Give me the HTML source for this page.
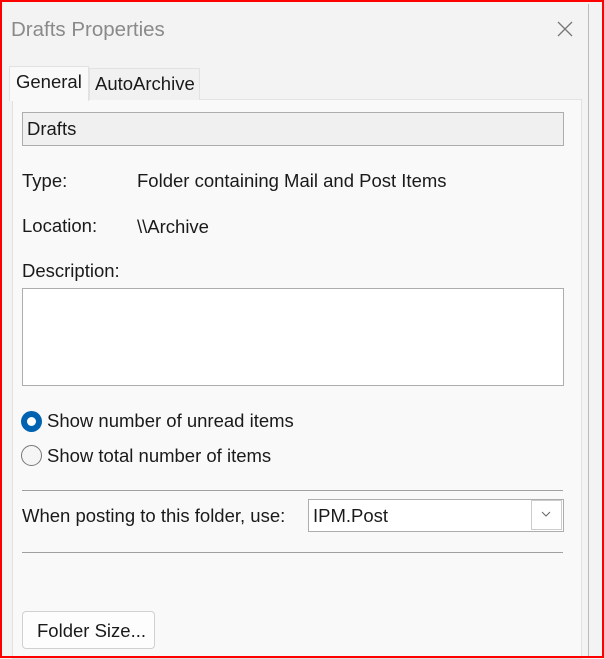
<!DOCTYPE html>
<html><head><style>
*{margin:0;padding:0;box-sizing:border-box}
body{width:604px;height:658px;overflow:hidden;background:#f3f3f3;font-family:"Liberation Sans",sans-serif;font-size:18.5px;color:#1a1a1a;position:relative}
.a{position:absolute;white-space:nowrap}
</style></head><body>
<div class="a" style="left:588px;top:4px;width:12px;height:652px;border-left:1px solid #bbb;background:#f3f3f3;border-top-right-radius:8px"></div>
<div class="a" style="left:11px;top:18px;font-size:20.5px;color:#8a8a8a">Drafts Properties</div>
<svg class="a" style="left:557px;top:21px" width="16" height="16"><path d="M1 1L15 15M15 1L1 15" stroke="#777" stroke-width="1.3"/></svg>
<div class="a" style="left:12px;top:99px;width:570px;height:560px;background:#f9f9f9;border:1px solid #e2e2e2"></div>
<div class="a" style="left:89px;top:68px;width:111px;height:32px;background:#f1f1f1;border:1px solid #e2e2e2;border-bottom:none"></div>
<div class="a" style="left:95px;top:73px">AutoArchive</div>
<div class="a" style="left:9px;top:66px;width:80px;height:35px;background:#f9f9f9;border:1px solid #e2e2e2;border-bottom:none"></div>
<div class="a" style="left:16px;top:71px">General</div>
<div class="a" style="left:22px;top:112px;width:542px;height:34px;background:#f0f0f0;border:1px solid #adadad"></div>
<div class="a" style="left:27px;top:118px">Drafts</div>
<div class="a" style="left:22px;top:170px">Type:</div>
<div class="a" style="left:137px;top:170px">Folder containing Mail and Post Items</div>
<div class="a" style="left:22px;top:215px">Location:</div>
<div class="a" style="left:137px;top:216px">\\Archive</div>
<div class="a" style="left:22px;top:260px">Description:</div>
<div class="a" style="left:22px;top:288px;width:542px;height:98px;background:#fff;border:1px solid #adadad"></div>
<div class="a" style="left:21px;top:411px;width:21px;height:21px;border-radius:50%;background:#0063b1"></div>
<div class="a" style="left:27px;top:417px;width:9px;height:9px;border-radius:50%;background:#fff"></div>
<div class="a" style="left:47px;top:410px">Show number of unread items</div>
<div class="a" style="left:21px;top:445px;width:21px;height:21px;border-radius:50%;background:#f5f5f5;border:1px solid #777"></div>
<div class="a" style="left:47px;top:445px">Show total number of items</div>
<div class="a" style="left:22px;top:490px;width:541px;height:1px;background:#a0a0a0"></div>
<div class="a" style="left:22px;top:505px">When posting to this folder, use:</div>
<div class="a" style="left:308px;top:499px;width:256px;height:33px;background:#fff;border:1px solid #adadad"></div>
<div class="a" style="left:313px;top:505px">IPM.Post</div>
<div class="a" style="left:531px;top:500px;width:31px;height:30px;border:1px solid #ccc;background:#fff"></div>
<svg class="a" style="left:541px;top:511px" width="10" height="7"><path d="M1 1L5 5L9 1" stroke="#666" fill="none"/></svg>
<div class="a" style="left:22px;top:552px;width:541px;height:1px;background:#a0a0a0"></div>
<div class="a" style="left:22px;top:611px;width:133px;height:38px;background:#fdfdfd;border:1px solid #d0d0d0;border-radius:4px"></div>
<div class="a" style="left:37px;top:620px">Folder Size...</div>
<div class="a" style="left:0;top:0;width:604px;height:658px;border:2px solid #f00"></div>
</body></html>
